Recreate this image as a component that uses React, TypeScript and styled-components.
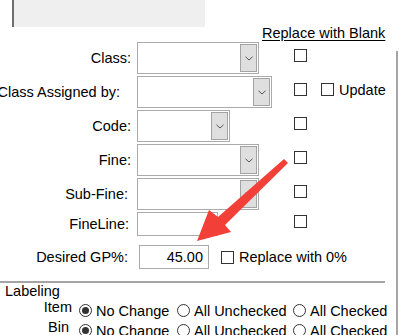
import React from "react";
import styled, { createGlobalStyle } from "styled-components";

const GlobalStyle = createGlobalStyle`
  html, body {
    margin: 0;
    padding: 0;
    background: #ffffff;
  }
  body {
    font-family: "Liberation Sans", Arial, sans-serif;
    font-size: 14.5px;
    color: #000;
  }
`;

const Page = styled.div`
  position: relative;
  width: 399px;
  height: 335px;
  overflow: hidden;
  background: #fff;
`;

const TopBox = styled.div`
  margin-left: 12px;
  width: 193px;
  height: 27px;
  box-sizing: border-box;
  border-left: 2px solid #6f6f6f;
  background: #efefef;
`;

const Header = styled.div`
  height: 15px;
  line-height: 14px;
  padding-left: 262px;
  margin-top: -1px;
  margin-bottom: 1px;
`;

const HeaderLink = styled.span`
  text-decoration: underline;
  text-underline-offset: 2px;
  white-space: nowrap;
`;

const Body = styled.div`
  display: flex;
`;

const Main = styled.div`
  flex: 1;
  min-width: 0;
`;

const RightRule = styled.div`
  width: 2px;
  margin-top: 9px;
  margin-right: 1px;
  background: #a5a5a5;
`;

const Rows = styled.div`
  display: flex;
  flex-direction: column;
  gap: 2px;
`;

const FormRow = styled.div<{ $h: number; $mt?: number }>`
  display: grid;
  grid-template-columns: 131px 151px 13px auto;
  column-gap: 6px;
  height: ${(p) => p.$h}px;
  margin-top: ${(p) => p.$mt ?? 0}px;
`;

const Label = styled.div<{ $pr?: number }>`
  display: flex;
  align-items: center;
  justify-content: flex-end;
  white-space: nowrap;
  padding-right: ${(p) => p.$pr ?? 0}px;
`;

const Select = styled.div<{ $w: number }>`
  width: ${(p) => p.$w}px;
  height: 100%;
  box-sizing: border-box;
  border: 1px solid #ababab;
  background: #fff;
  padding: 1px 1px 1px 0;
  display: flex;
  justify-content: flex-end;
`;

const DropButton = styled.div`
  width: 17px;
  box-sizing: border-box;
  border: 1px solid #a3a3a3;
  background: #dfdfdf;
  display: flex;
  align-items: center;
  justify-content: center;
`;

const TextBox = styled.div<{ $w: number; $ml?: number }>`
  width: ${(p) => p.$w}px;
  height: 24px;
  margin-left: ${(p) => p.$ml ?? 0}px;
  box-sizing: border-box;
  border: 1px solid #ababab;
  background: #fff;
  display: flex;
  align-items: center;
  justify-content: flex-end;
  padding-right: 5px;
  flex-shrink: 0;
`;

const Box = styled.div<{ $mt?: number }>`
  width: 13px;
  height: 13px;
  box-sizing: border-box;
  border: 1px solid #333;
  background: #fff;
  margin-top: ${(p) => p.$mt ?? 7}px;
  flex-shrink: 0;
`;

const CheckLabel = styled.div<{ $mt?: number; $ml?: number }>`
  display: flex;
  align-items: center;
  gap: 5px;
  height: 13px;
  margin-top: ${(p) => p.$mt ?? 0}px;
  margin-left: ${(p) => p.$ml ?? 0}px;
  white-space: nowrap;
`;

const GpCell = styled.div`
  grid-column: 2 / span 3;
  display: flex;
  align-items: center;
  gap: 12px;
`;

const Separator = styled.div`
  height: 2px;
  margin: 12px 11px 0 0;
  background: #a5a5a5;
`;

const SectionTitle = styled.div`
  line-height: 16px;
  padding-left: 5px;
`;

const RadioRow = styled.div`
  display: grid;
  grid-template-columns: 79px 98px 116px auto;
  height: 20px;
  align-items: center;
`;

const RadioRowLabel = styled.div<{ $pr: number }>`
  text-align: right;
  padding-right: ${(p) => p.$pr}px;
  padding-bottom: 7px;
`;

const RadioOption = styled.div`
  display: flex;
  align-items: center;
  gap: 4px;
  white-space: nowrap;
`;

const RadioDot = styled.div<{ $on?: boolean }>`
  width: 13px;
  height: 13px;
  box-sizing: border-box;
  border: 1px solid #333;
  border-radius: 50%;
  background: #fff;
  display: flex;
  align-items: center;
  justify-content: center;
  &::after {
    content: "";
    display: ${(p) => (p.$on ? "block" : "none")};
    width: 7px;
    height: 7px;
    border-radius: 50%;
    background: #333;
  }
`;

const ArrowLayer = styled.svg`
  position: absolute;
  left: 0;
  top: 0;
  pointer-events: none;
`;

function Chevron() {
  return (
    <svg width="8" height="5" viewBox="0 0 8 5">
      <path d="M0.5 0.8 L4 4 L7.5 0.8" fill="none" stroke="#555" strokeWidth="1" />
    </svg>
  );
}

function DropDown({ w }: { w: number }) {
  return (
    <Select $w={w}>
      <DropButton>
        <Chevron />
      </DropButton>
    </Select>
  );
}

function Radio({ on, label }: { on?: boolean; label: string }) {
  return (
    <RadioOption>
      <RadioDot $on={on} />
      <span>{label}</span>
    </RadioOption>
  );
}

const selects = [
  { label: "Class:", w: 122, pr: 0 },
  { label: "Class Assigned by:", w: 135, pr: 11, update: true },
  { label: "Code:", w: 93, pr: 0 },
  { label: "Fine:", w: 122, pr: 0 },
  { label: "Sub-Fine:", w: 122, pr: 3 },
];

export default function App() {
  return (
    <Page>
      <GlobalStyle />
      <TopBox />
      <Header>
        <HeaderLink>Replace with Blank</HeaderLink>
      </Header>
      <Body>
        <Main>
          <Rows>
            {selects.map((s) => (
              <FormRow key={s.label} $h={32}>
                <Label $pr={s.pr}>{s.label}</Label>
                <DropDown w={s.w} />
                <Box />
                {s.update ? (
                  <CheckLabel $mt={7} $ml={8}>
                    <Box $mt={0} />
                    <span>Update</span>
                  </CheckLabel>
                ) : (
                  <span />
                )}
              </FormRow>
            ))}
            <FormRow $h={24}>
              <Label $pr={2}>FineLine:</Label>
              <TextBox $w={81} />
              <Box $mt={3} />
            </FormRow>
            <FormRow $h={24} $mt={7}>
              <Label $pr={3}>Desired GP%:</Label>
              <GpCell>
                <TextBox $w={70} $ml={2}>45.00</TextBox>
                <CheckLabel>
                  <Box $mt={0} />
                  <span>Replace with 0%</span>
                </CheckLabel>
              </GpCell>
            </FormRow>
          </Rows>
          <Separator />
          <SectionTitle>Labeling</SectionTitle>
          <RadioRow>
            <RadioRowLabel $pr={7}>Item</RadioRowLabel>
            <Radio on label="No Change" />
            <Radio label="All Unchecked" />
            <Radio label="All Checked" />
          </RadioRow>
          <RadioRow>
            <RadioRowLabel $pr={10}>Bin</RadioRowLabel>
            <Radio on label="No Change" />
            <Radio label="All Unchecked" />
            <Radio label="All Checked" />
          </RadioRow>
        </Main>
        <RightRule />
      </Body>
      <ArrowLayer width="399" height="335" viewBox="0 0 399 335">
        <polygon
          points="284,159 218,217 209,210 197,241 231,232 225,225 288,163"
          fill="#f23f38"
        />
      </ArrowLayer>
    </Page>
  );
}
